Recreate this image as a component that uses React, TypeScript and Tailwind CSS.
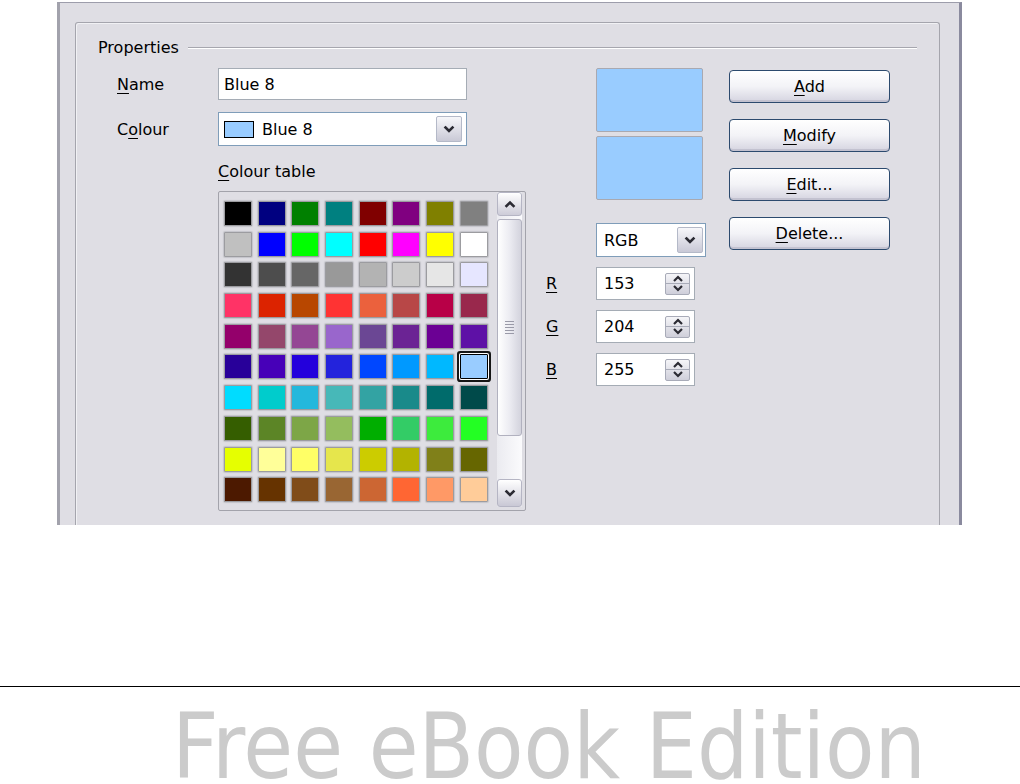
import React from "react"

const palette = [
  ["#000000", "#000080", "#008000", "#008080", "#800000", "#800080", "#808000", "#808080"],
  ["#c0c0c0", "#0000ff", "#00ff00", "#00ffff", "#ff0000", "#ff00ff", "#ffff00", "#ffffff"],
  ["#333333", "#4d4d4d", "#666666", "#999999", "#b3b3b3", "#cccccc", "#e6e6e6", "#e6e6ff"],
  ["#ff3366", "#dc2300", "#b84700", "#ff3333", "#eb613d", "#b84747", "#b80047", "#99284c"],
  ["#94006b", "#94476b", "#944794", "#9966cc", "#6b4794", "#6b2394", "#6b0094", "#5e11a6"],
  ["#280099", "#4700b8", "#2300dc", "#2323dc", "#0047ff", "#0099ff", "#00b8ff", "#99ccff"],
  ["#00dcff", "#00cccc", "#23b8dc", "#47b8b8", "#33a3a3", "#198a8a", "#006b6b", "#004a4a"],
  ["#355e00", "#5c8526", "#7da647", "#94bd5e", "#00ae00", "#33cc66", "#3deb3d", "#23ff23"],
  ["#e6ff00", "#ffff99", "#ffff66", "#e6e64c", "#cccc00", "#b3b300", "#808019", "#666600"],
  ["#4c1900", "#663300", "#804c19", "#996633", "#cc6633", "#ff6633", "#ff9966", "#ffcc99"],
]

// bold XP-style chevron
function Chevron({ up = false, size = 12 }: { up?: boolean; size?: number }) {
  return (
    <svg width={size} height={size} viewBox="0 0 12 12">
      <path
        d={up ? "M2.5 8 L6 4.5 L9.5 8" : "M2.5 4.5 L6 8 L9.5 4.5"}
        fill="none"
        stroke="#2b2b33"
        strokeWidth="2.6"
        strokeLinecap="square"
      />
    </svg>
  )
}

function DropButton() {
  return (
    <div className="w-[26px] h-[26px] rounded-[2px] border border-[#b4b9c8] bg-gradient-to-b from-[#f7f7fa] to-[#c9c9d6] flex items-center justify-center">
      <Chevron />
    </div>
  )
}

function SpinButton() {
  return (
    <div className="w-[25px] h-[22px] rounded-[2px] border border-[#a8abb8] bg-gradient-to-b from-[#f5f5f8] to-[#cfcfda] flex flex-col">
      <div className="flex-1 flex items-center justify-center border-b border-[#a8abb8]">
        <svg width="12" height="7" viewBox="0 0 12 7">
          <path d="M2 6 L6 2 L10 6" fill="none" stroke="#2b2b33" strokeWidth="2.2" />
        </svg>
      </div>
      <div className="flex-1 flex items-center justify-center">
        <svg width="12" height="7" viewBox="0 0 12 7">
          <path d="M2 1 L6 5 L10 1" fill="none" stroke="#2b2b33" strokeWidth="2.2" />
        </svg>
      </div>
    </div>
  )
}

function Key({ children }: { children: React.ReactNode }) {
  return <span className="underline underline-offset-[3px]">{children}</span>
}

function XpButton({ k, rest }: { k: string; rest: string }) {
  return (
    <div className="h-[33px] rounded-[4px] border border-[#2c4a6e] bg-gradient-to-b from-white via-[#f3f3f7] to-[#d5d4e0] shadow-[inset_0_-2px_0_#c3c2d0] flex items-center justify-center">
      <span>
        <Key>{k}</Key>
        {rest}
      </span>
    </div>
  )
}

function SpinField({ label, value }: { label: string; value: string }) {
  return (
    <div className="flex items-center">
      <div className="w-[50px]">
        <Key>{label}</Key>
      </div>
      <div className="w-[99px] h-[33px] border border-[#a5acb5] bg-white flex items-center pl-[7px] pr-[4px]">
        <span className="flex-1">{value}</span>
        <SpinButton />
      </div>
    </div>
  )
}

function ColourTable() {
  return (
    <div className="ml-[101px] mt-[10px] w-[308px] h-[320px] border border-[#a3a3ab] rounded-[2px] flex">
      <div className="pl-[5px] pt-[9px] grid grid-cols-[repeat(8,28px)] auto-rows-[25px] gap-x-[5.7px] gap-y-[5.7px] content-start">
        {palette.flat().map((c, i) => (
          <div
            key={i}
            className={
              i === 47
                ? "border border-black rounded-[1px] shadow-[0_0_0_1px_#ffffff,0_0_0_3px_#151515]"
                : "border border-[#9c9ca0] rounded-[1px] shadow-[0_0_1px_1px_#c4c4ca]"
            }
            style={{ backgroundColor: c }}
          />
        ))}
      </div>
      <div className="ml-auto mr-[3px] mb-[3px] w-[25px] flex flex-col bg-gradient-to-r from-[#ebebf0] to-[#fbfbfd] rounded-[2px]">
        <div className="h-[24px] rounded-[3px] border border-[#b5b5c4] bg-gradient-to-b from-white to-[#cdccd8] flex items-center justify-center">
          <Chevron up />
        </div>
        <div className="mt-[3px] h-[217px] rounded-[3px] border border-[#b1b1bf] bg-gradient-to-r from-white via-[#ececf2] to-[#d3d3dd] flex flex-col items-center justify-center gap-[2px]">
          <div className="w-[9px] h-px bg-[#9a9aa8]" />
          <div className="w-[9px] h-px bg-[#9a9aa8]" />
          <div className="w-[9px] h-px bg-[#9a9aa8]" />
          <div className="w-[9px] h-px bg-[#9a9aa8]" />
          <div className="w-[9px] h-px bg-[#9a9aa8]" />
        </div>
        <div className="flex-1" />
        <div className="h-[28px] rounded-[3px] border border-[#b5b5c4] bg-gradient-to-b from-white to-[#c9c8d5] flex items-center justify-center">
          <Chevron />
        </div>
      </div>
    </div>
  )
}

export default function App() {
  return (
    <div className="w-[1020px] h-[784px] bg-white overflow-hidden font-['DejaVu_Sans',sans-serif] text-[16px] text-black">
      {/* dialog frame */}
      <div className="ml-[57px] mt-[2px] w-[905px] h-[523px] border-t border-l-[3px] border-r-[3px] border-t-[#9d9dab] border-l-[#a2a2ac] border-r-[#8a8a9e] border-l-double bg-[#dfdee4] pl-[15px] pr-[19px] pt-[19px]">
        <div className="h-full border border-b-0 border-[#a5a5ad] rounded-t-[3px] shadow-[inset_1px_1px_0_#f1f1f4]">
          <div className="flex items-center pl-[22px] pr-[22px] pt-[15px] leading-[19px]">
            <span>Properties</span>
            <div className="flex-1 ml-[9px] border-t border-b border-t-[#a6a6ae] border-b-white" />
          </div>

          <div className="flex pl-[41px] mt-[11px] leading-[19px]">
            {/* left column */}
            <div className="w-[409px] flex flex-col">
              <div className="flex items-center h-[32px]">
                <div className="w-[101px]">
                  <Key>N</Key>ame
                </div>
                <div className="w-[249px] h-[32px] border border-[#a5acb5] bg-white flex items-center pl-[5px]">
                  Blue 8
                </div>
              </div>
              <div className="flex items-center h-[34px] mt-[12px]">
                <div className="w-[101px]">
                  C<Key>o</Key>lour
                </div>
                <div className="w-[249px] h-[34px] border border-[#7f9db9] bg-white flex items-center pl-[5px] pr-[4px]">
                  <div className="w-[30px] h-[17px] border border-black bg-[#99ccff]" />
                  <span className="ml-[8px] flex-1">Blue 8</span>
                  <DropButton />
                </div>
              </div>
              <div className="ml-[101px] mt-[16px]">
                <Key>C</Key>olour table
              </div>
              <ColourTable />
            </div>

            {/* middle column */}
            <div className="ml-[20px] w-[160px] flex flex-col">
              <div className="ml-[50px] w-[107px] h-[64px] rounded-[2px] border border-[#a9a9b1] bg-[#99ccff]" />
              <div className="ml-[50px] mt-[4px] w-[107px] h-[64px] rounded-[2px] border border-[#a9a9b1] bg-[#99ccff]" />
              <div className="ml-[50px] mt-[23px] w-[110px] h-[34px] border border-[#7f9db9] bg-white flex items-center pl-[7px] pr-[2px]">
                <span className="flex-1">RGB</span>
                <DropButton />
              </div>
              <div className="mt-[10px] flex flex-col gap-[10px]">
                <SpinField label="R" value="153" />
                <SpinField label="G" value="204" />
                <SpinField label="B" value="255" />
              </div>
            </div>

            {/* buttons */}
            <div className="ml-[23px] w-[161px] mt-[2px] flex flex-col gap-[16px]">
              <XpButton k="A" rest="dd" />
              <XpButton k="M" rest="odify" />
              <XpButton k="E" rest="dit..." />
              <XpButton k="D" rest="elete..." />
            </div>
          </div>
        </div>
      </div>

      <div className="mt-[161px] h-px bg-black" />
      <div className="mt-[24px] pl-[172px] text-[90px] leading-[0.8] text-[#cbcbcb] whitespace-nowrap font-['DejaVu_Sans_Condensed','DejaVu_Sans',sans-serif] [font-stretch:condensed]">
        Free eBook Edition
      </div>
    </div>
  )
}
